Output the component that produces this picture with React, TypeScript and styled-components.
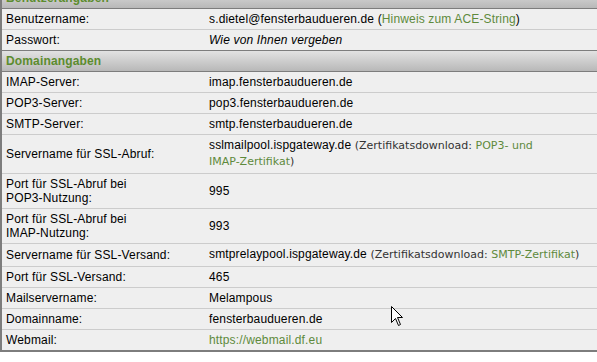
import {FC, ReactNode} from 'react'
import styled, {createGlobalStyle} from 'styled-components'

const COLORS = {
    rowBg: '#efefef',
    rowLine: '#cccccc',
    frame: '#7d7d7d',
    green: '#5c8c2e',
    link: '#5e8a3c',
    text: '#000000',
    small: '#333333',
}

type Row = {
    label: ReactNode
    value: ReactNode
}

const GlobalStyle = createGlobalStyle`
  html, body {
    margin: 0;
    padding: 0;
    background: #ffffff;
    overflow: hidden;
  }
  body {
    font-family: "Liberation Sans", Arial, sans-serif;
    font-size: 12px;
    letter-spacing: 0.15px;
    color: ${COLORS.text};
  }
`

const Page = styled.div`
  position: relative;
  width: 597px;
  height: 362px;
  overflow: hidden;
`

const Table = styled.div`
  margin-top: -13px;
  width: 600px;
  background: ${COLORS.rowBg};
  border-left: 2px solid ${COLORS.frame};
  border-bottom: 2px solid ${COLORS.frame};
`

const SectionHeader = styled.div`
  height: 20px;
  line-height: 20px;
  padding: 0 4px;
  font-weight: bold;
  color: ${COLORS.green};
  background: linear-gradient(to bottom, #e2e2e2 0%, #c9c9c9 60%, #b8b8b8 100%);
  border-top: 1px solid ${COLORS.frame};
  border-bottom: 1px solid ${COLORS.frame};
`

const DataRow = styled.div`
  display: grid;
  grid-template-columns: 202px 1fr;
  align-items: center;
  border-bottom: 1px solid ${COLORS.rowLine};

  &:last-child {
    border-bottom: none;
  }
`

const LabelCell = styled.div`
  padding: 3px 10px 3px 4px;
  line-height: 14px;
`

const ValueCell = styled.div`
  padding: 3px 5px;
  line-height: 14px;
`

const NoWrap = styled.span`
  white-space: nowrap;
`

const SmallText = styled.span`
  font-family: "DejaVu Sans", Verdana, sans-serif;
  font-size: 11px;
  letter-spacing: 0;
  line-height: 16px;
  color: ${COLORS.small};
`

const Link = styled.span`
  color: ${COLORS.link};
`

const Italic = styled.span`
  font-style: italic;
`

const CursorSvg = styled.svg`
  position: absolute;
  left: 391px;
  top: 306px;
`

const getUserRows = (): Row[] => [
    {
        label: 'Benutzername:',
        value: <>s.dietel@fensterbaudueren.de (<Link>Hinweis zum ACE-String</Link>)</>,
    },
    {label: 'Passwort:', value: <Italic>Wie von Ihnen vergeben</Italic>},
]

const getDomainRows = (): Row[] => [
    {label: 'IMAP-Server:', value: 'imap.fensterbaudueren.de'},
    {label: 'POP3-Server:', value: 'pop3.fensterbaudueren.de'},
    {label: 'SMTP-Server:', value: 'smtp.fensterbaudueren.de'},
    {
        label: 'Servername für SSL-Abruf:',
        value: <>sslmailpool.ispgateway.de <SmallText>(Zertifikatsdownload: <Link>POP3- und</Link><br/><Link>IMAP-Zertifikat</Link>)</SmallText></>,
    },
    {label: <>Port für SSL-Abruf bei <NoWrap>POP3-Nutzung:</NoWrap></>, value: '995'},
    {label: <>Port für SSL-Abruf bei <NoWrap>IMAP-Nutzung:</NoWrap></>, value: '993'},
    {
        label: 'Servername für SSL-Versand:',
        value: <>smtprelaypool.ispgateway.de <SmallText>(Zertifikatsdownload: <Link>SMTP-Zertifikat</Link>)</SmallText></>,
    },
    {label: 'Port für SSL-Versand:', value: '465'},
    {label: 'Mailservername:', value: 'Melampous'},
    {label: 'Domainname:', value: 'fensterbaudueren.de'},
    {label: 'Webmail:', value: <Link>https://webmail.df.eu</Link>},
]

const Section: FC<{title: string, rows: Row[]}> = ({title, rows}) => (
    <div>
        <SectionHeader>{title}</SectionHeader>
        {rows.map((row, i) => (
            <DataRow key={i}>
                <LabelCell>{row.label}</LabelCell>
                <ValueCell>{row.value}</ValueCell>
            </DataRow>
        ))}
    </div>
)

const Cursor: FC = () => (
    <CursorSvg width="13" height="21" viewBox="0 0 13 21">
        <path d="M0.5 0.5 L0.5 16.5 L4.5 12.5 L7.5 19.5 L9.5 18.5 L6.5 11.5 L11.5 11.5 Z"
              fill="#fff" stroke="#000" strokeWidth="1"/>
    </CursorSvg>
)

const App: FC = () => {
    return (
        <>
            <GlobalStyle/>
            <Page>
                <Table>
                    <Section title="Benutzerangaben" rows={getUserRows()}/>
                    <Section title="Domainangaben" rows={getDomainRows()}/>
                </Table>
                <Cursor/>
            </Page>
        </>
    )
}

export default App
